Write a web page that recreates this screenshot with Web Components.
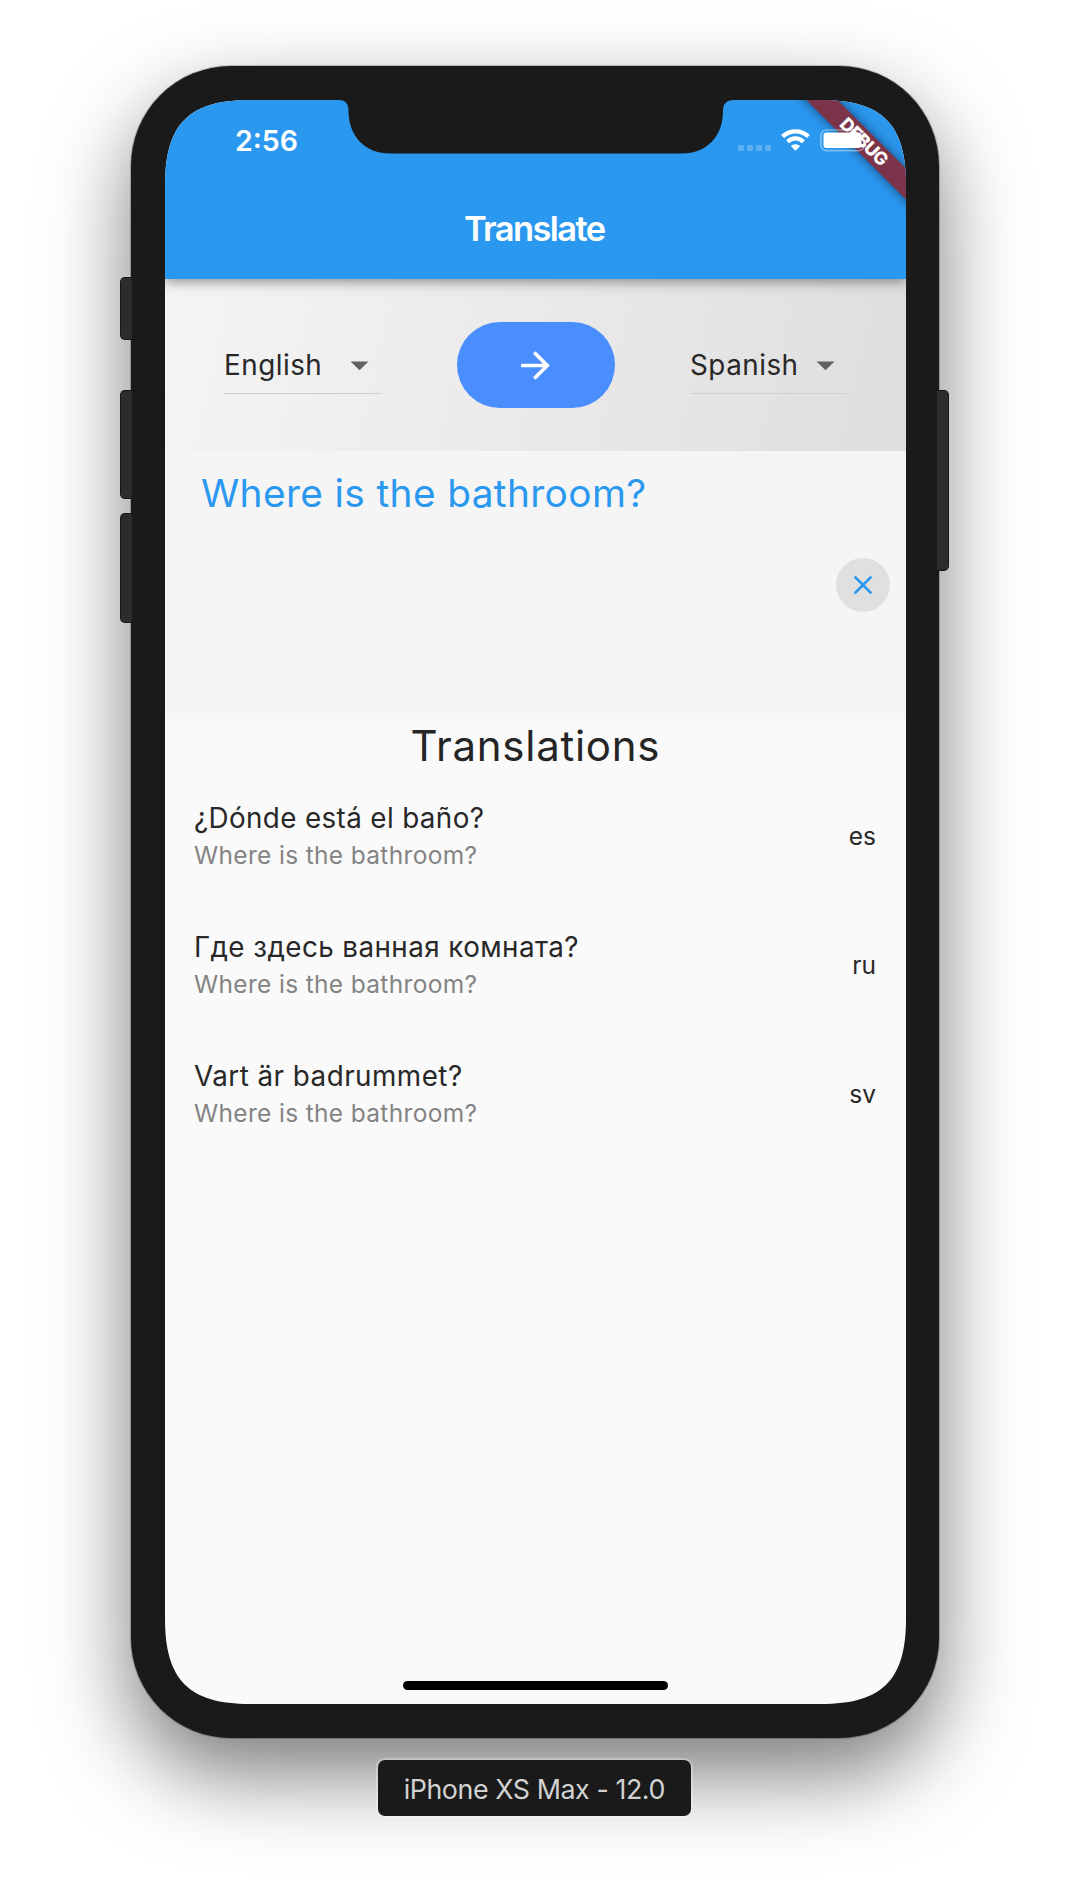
<!DOCTYPE html>
<html lang="en">
<head>
<meta charset="utf-8">
<title>Translate</title>
<style>
body{margin:0;background:#fff;font-family:Inter,"Liberation Sans",sans-serif;overflow:hidden}
main{width:1070px;height:1900px;box-sizing:border-box;padding-top:66px;display:flex;flex-direction:column;align-items:center;overflow:hidden}
</style>
</head>
<body>
<main>
<phone-frame>
  <status-bar slot="top">2:56</status-bar>
  <app-bar slot="top">Translate</app-bar>
  <language-bar>
    <language-select width="98">English</language-select>
    <translate-button></translate-button>
    <language-select width="108">Spanish</language-select>
  </language-bar>
  <source-input>Where is the bathroom?</source-input>
  <section-heading>Translations</section-heading>
  <translation-item tw="290"><span>¿Dónde está el baño?</span><span slot="sub">Where is the bathroom?</span><span slot="code">es</span></translation-item>
  <translation-item tw="385"><span>Где здесь ванная комната?</span><span slot="sub">Where is the bathroom?</span><span slot="code">ru</span></translation-item>
  <translation-item tw="268"><span>Vart är badrummet?</span><span slot="sub">Where is the bathroom?</span><span slot="code">sv</span></translation-item>
</phone-frame>
<device-label>iPhone XS Max - 12.0</device-label>
</main>
<script>
function define(name, html){
  customElements.define(name, class extends HTMLElement{
    constructor(){
      super();
      const root=this.attachShadow({mode:'open'});
      root.innerHTML=typeof html==='function'?html(this):html;
    }
  });
}

define('phone-frame', `<style>
:host{display:block;position:relative;width:808px;height:1672px;box-sizing:border-box;padding:34px 33px 34px 34px;background:#1a1a1a;border-radius:100px;flex:none;
 box-shadow:0 0 0 1px rgba(0,0,0,.22),0 36px 84px rgba(0,0,0,.52)}
.screen{position:relative;width:741px;height:1604px;background:#fafafa;display:flex;flex-direction:column;
 clip-path:path("M0 85C0 24 24 0 85 0H656C717 0 741 24 741 85V1519C741 1580 717 1604 656 1604H85C24 1604 0 1580 0 1519Z")}
header{position:relative;z-index:1;height:179px;flex:none;background:#2b98f0;display:flex;flex-direction:column;
 box-shadow:0 3px 8px rgba(0,0,0,.24),0 6px 13px rgba(0,0,0,.14)}
.notch{position:absolute;left:171px;top:-1px;z-index:3}
.home{margin:auto auto 14px;width:265px;height:9px;border-radius:5px;background:#000}
i{position:absolute;box-sizing:border-box;width:12px;background:#2c2c2c;border:1px solid #171717}
.l{left:-11px;border-radius:5px 0 0 5px;border-right:0}
.r{right:-10px;border-radius:0 5px 5px 0;border-left:0}
</style>
<i class="l" style="top:211px;height:63px"></i>
<i class="l" style="top:324px;height:109px"></i>
<i class="l" style="top:447px;height:110px"></i>
<i class="r" style="top:324px;height:181px"></i>
<div class="screen">
 <header><slot name="top"></slot></header>
 <slot></slot>
 <div class="home"></div>
 <svg class="notch" width="400" height="56" viewBox="0 -1 400 56"><path fill="#1a1a1a" d="M0-1V0H3C10 0 12.500 4 12.500 11C12.500 36 29 53.500 54 53.500H346C371 53.500 387 36 387 11C387 4 390 0 398 0H400V-1Z"/></svg>
</div>`);

define('status-bar', `<style>
:host{display:flex;height:79px;box-sizing:border-box;padding:2px 37px 0 70px;align-items:center;color:#fff;position:relative}
.t{font-size:28.500px;font-weight:600;line-height:34px;flex:1}
svg{display:block;position:relative;z-index:2}
svg+svg{margin-left:10px}
debug-banner{position:absolute;right:0;top:0;z-index:1}
</style>
<div class="t"><fit-text width="63"><slot></slot></fit-text></div>
<svg width="33" height="24" viewBox="0 0 33 24"><g fill="#fff" fill-opacity=".24"><rect y="16" width="6" height="6" rx="1.500"/><rect x="9" y="16" width="6" height="6" rx="1.500"/><rect x="18" y="16" width="6" height="6" rx="1.500"/><rect x="27" y="16" width="6" height="6" rx="1.500"/></g></svg>
<svg width="29" height="24" viewBox="0 0 29 24"><g transform="translate(0 -.7)"><g fill="none" stroke="#fff" stroke-width="4.200"><path d="M1.600 8.300A18.300 18.300 0 0 1 27.400 8.300"/><path d="M6.600 13.400A11.200 11.200 0 0 1 22.400 13.400"/></g><path fill="#fff" d="M14.500 22.500L9.800 17.800A6.700 6.700 0 0 1 19.200 17.800Z"/></g></svg>
<svg width="49" height="24" viewBox="0 0 49 24"><rect x=".9" y="1" width="43.400" height="20.600" rx="5.500" fill="none" stroke="#fff" stroke-opacity=".38" stroke-width="1.700"/><rect x="3.500" y="3.500" width="38" height="15.500" rx="3" fill="#fff"/><path d="M46 7.800Q48.500 9 48.500 11.300T46 14.800Z" fill="#fff" fill-opacity=".38"/></svg>
<debug-banner></debug-banner>`);

define('debug-banner', `<style>
:host{display:block;width:130px;height:130px;overflow:hidden}
div{position:absolute;left:-42.200px;top:30.500px;width:260px;height:21.700px;transform:rotate(45deg);background:#7b3449;box-shadow:0 0 12px rgba(0,0,0,.5);
 color:#fff;font-size:18px;font-weight:800;line-height:21.700px;text-align:center;box-sizing:border-box}
</style><div><fit-text width="60">DEBUG</fit-text></div>`);

define('app-bar', `<style>
:host{display:flex;height:100px;align-items:center;justify-content:center;color:#fff;font-size:34.500px;font-weight:600;line-height:42px;padding-right:1px}
</style><fit-text width="142"><slot></slot></fit-text>`);

define('language-bar', `<style>
:host{display:flex;height:172px;flex:none;box-sizing:border-box;padding:0 59px 0 59px;align-items:center;justify-content:space-between;background:linear-gradient(103deg,#f5f5f5,#dedede)}
</style><slot></slot>`);

define('language-select', el=>`<style>
:host{display:flex;width:157px;height:58px;box-sizing:border-box;padding-top:1px;border-bottom:1px solid #d0d0d0;align-items:center;justify-content:space-between;color:#282828;font-size:27.800px;line-height:34px}
svg{display:block}
</style><fit-text width="${el.getAttribute('width')}"><slot></slot></fit-text>
<svg width="43" height="43" viewBox="0 0 24 24"><path fill="#616161" d="M7 9.700l5 5 5-5z"/></svg>`);

define('translate-button', `<style>
:host{display:flex;width:158px;height:86px;border-radius:43px;background:#4a8dfd;align-items:center;justify-content:center}
svg{display:block}
</style><svg width="43" height="43" viewBox="0 0 24 24"><path fill="#fff" d="M12 4l-1.410 1.410L16.170 11H4v2h12.170l-5.580 5.590L12 20l8-8z"/></svg>`);

define('source-input', `<style>
:host{display:flex;flex-direction:column;height:268px;flex:none;box-sizing:border-box;padding:19px 16px 0 36px;background:#f5f5f5;color:#2b98f0;font-size:38.800px;line-height:45px}
.x{display:flex;width:54px;height:54px;border-radius:50%;background:#e0e0e0;align-self:flex-end;align-items:center;justify-content:center;margin-top:43px}
fit-text{align-self:flex-start}
</style><fit-text width="445"><slot></slot></fit-text>
<div class="x"><svg width="32" height="32" viewBox="0 0 24 24"><path fill="#2b98f0" d="M19 6.410L17.590 5 12 10.590 6.410 5 5 6.410 10.590 12 5 17.590 6.410 19 12 13.410 17.590 19 19 17.590 13.410 12z"/></svg></div>`);

define('section-heading', `<style>
:host{display:flex;justify-content:center;height:53px;flex:none;color:#252525;font-size:42px;line-height:54px;padding-right:1px}
</style><fit-text width="249"><slot></slot></fit-text>`);

define('translation-item', el=>`<style>
:host{display:flex;height:129px;flex:none;box-sizing:border-box;padding:29px 30px 0 29px;justify-content:space-between;color:#282828;line-height:34px}
.c{display:flex;flex-direction:column;align-items:flex-start;gap:3px}
.a{font-size:27.800px}
.b{font-size:24.500px;color:#848484}
.k{font-size:24.500px;line-height:70px}
</style><div class="c"><fit-text class="a" width="${el.getAttribute('tw')}"><slot></slot></fit-text>
<fit-text class="b" width="283"><slot name="sub"></slot></fit-text></div>
<div class="k"><slot name="code"></slot></div>`);

define('device-label', `<style>
:host{display:flex;width:313px;height:56px;margin:22px 1px 0 0;border-radius:7px;background:#1a1a1a;box-shadow:0 0 0 2px rgba(255,255,255,.28);align-items:center;justify-content:center;color:#d2d2d2;font-size:26.800px;line-height:56px;box-sizing:border-box;padding-top:2px;position:relative}
</style><fit-text width="262"><slot></slot></fit-text>`);

/* Spreads its text over the given width by letter spacing. */
customElements.define('fit-text', class extends HTMLElement{
  constructor(){
    super();
    this.attachShadow({mode:'open'}).innerHTML='<style>:host{display:inline-block;white-space:nowrap}</style><slot></slot>';
  }
  connectedCallback(){
    const text=this.shadowRoot.querySelector('slot').assignedNodes({flatten:true}).map(n=>n.textContent).join('').trim();
    const gaps=text.length-1;
    if(gaps<1)return;
    const space=(parseFloat(this.getAttribute('width'))-this.offsetWidth)/gaps;
    this.style.letterSpacing=space.toFixed(3)+'px';
    this.style.marginRight=(-space).toFixed(3)+'px';
  }
});
</script>
</body>
</html>
